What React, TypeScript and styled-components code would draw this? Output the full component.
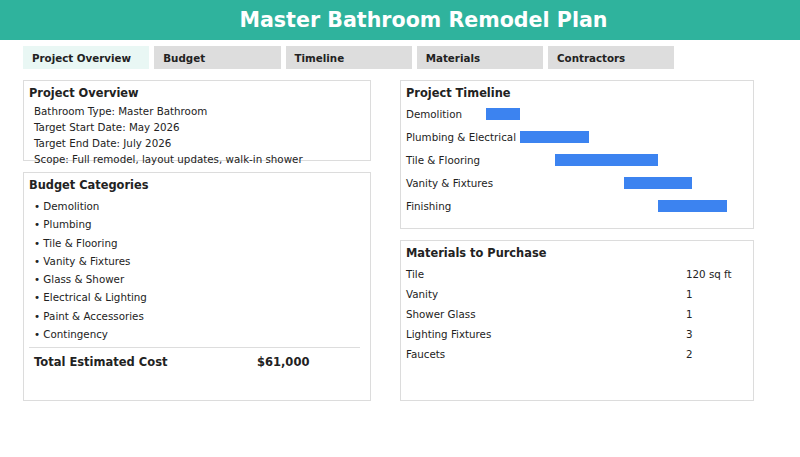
import React from "react";
import styled, { createGlobalStyle } from "styled-components";

const Global = createGlobalStyle`
  html, body { margin: 0; padding: 0; background: #fff; }
  body { font-family: "DejaVu Sans", "Liberation Sans", sans-serif; color: #222; overflow: hidden; }
`;

const Page = styled.div`
  width: 800px;
  height: 457px;
  overflow: hidden;
`;

const Header = styled.header`
  height: 40px;
  background: #2fb39d;
  display: flex;
  align-items: center;
  justify-content: center;
  padding-left: 47px;
`;

const Title = styled.h1`
  margin: 0;
  color: #fff;
  font-size: 20.6px;
  font-weight: bold;
`;

const Tabs = styled.nav`
  display: flex;
  gap: 5px;
  padding: 6px 0 0 23px;
`;

const Tab = styled.div<{ $active?: boolean }>`
  width: 126.25px;
  height: 23px;
  box-sizing: border-box;
  padding-left: 9px;
  display: flex;
  align-items: center;
  font-size: 10.3px;
  font-weight: bold;
  background: ${(p) => (p.$active ? "#e9f7f4" : "#dddddd")};
`;

const Grid = styled.main`
  display: grid;
  grid-template-columns: 348px 354px;
  column-gap: 29px;
  padding: 11px 0 0 23px;
`;

const Column = styled.div`
  display: flex;
  flex-direction: column;
  gap: 11px;
`;

const Card = styled.section<{ $h: number }>`
  height: ${(p) => p.$h}px;
  box-sizing: border-box;
  border: 1px solid #dcdcdc;
  padding: 4px 5px;
`;

const CardTitle = styled.h2`
  margin: 0;
  font-size: 11.4px;
  font-weight: bold;
  line-height: 16px;
`;

const InfoList = styled.div`
  padding: 2px 0 0 5px;
  font-size: 10.3px;
  line-height: 16px;
  white-space: nowrap;
`;

const BulletList = styled.ul`
  list-style: none;
  margin: 0;
  padding: 4px 0 0 5px;
  font-size: 10.3px;
`;

const Bullet = styled.li`
  line-height: 18.3px;
`;

const Divider = styled.hr`
  border: none;
  border-top: 1px solid #dddddd;
  margin: 4px 5px 0 0;
`;

const TotalRow = styled.div`
  display: grid;
  grid-template-columns: 223px auto;
  padding: 6px 0 0 5px;
  font-size: 11.5px;
  font-weight: bold;
  line-height: 16px;
`;

const TimelineRows = styled.div`
  padding-top: 1px;
  display: flex;
  flex-direction: column;
`;

const TimelineRow = styled.div`
  position: relative;
  height: 23px;
  display: flex;
  align-items: center;
  font-size: 10.3px;
`;

const Bar = styled.div`
  position: absolute;
  top: 6px;
  height: 12px;
  background: #3c83f0;
`;

const MaterialRows = styled.div`
  padding-top: 3px;
`;

const MaterialRow = styled.div`
  display: grid;
  grid-template-columns: 280px auto;
  height: 20px;
  align-items: center;
  font-size: 10.3px;
`;

const tabs = ["Project Overview", "Budget", "Timeline", "Materials", "Contractors"];

const overview = [
  "Bathroom Type: Master Bathroom",
  "Target Start Date: May 2026",
  "Target End Date: July 2026",
  "Scope: Full remodel, layout updates, walk-in shower",
];

const budget = [
  "Demolition",
  "Plumbing",
  "Tile & Flooring",
  "Vanity & Fixtures",
  "Glass & Shower",
  "Electrical & Lighting",
  "Paint & Accessories",
  "Contingency",
];

const unit = 34.4;
const timeline = [
  { name: "Demolition", start: 0, len: 1 },
  { name: "Plumbing & Electrical", start: 1, len: 2 },
  { name: "Tile & Flooring", start: 2, len: 3 },
  { name: "Vanity & Fixtures", start: 4, len: 2 },
  { name: "Finishing", start: 5, len: 2 },
];

const materials = [
  ["Tile", "120 sq ft"],
  ["Vanity", "1"],
  ["Shower Glass", "1"],
  ["Lighting Fixtures", "3"],
  ["Faucets", "2"],
];

export default function App() {
  return (
    <Page>
      <Global />
      <Header>
        <Title>Master Bathroom Remodel Plan</Title>
      </Header>
      <Tabs>
        {tabs.map((t, i) => (
          <Tab key={t} $active={i === 0}>
            {t}
          </Tab>
        ))}
      </Tabs>
      <Grid>
        <Column>
          <Card $h={81}>
            <CardTitle>Project Overview</CardTitle>
            <InfoList>
              {overview.map((l) => (
                <div key={l}>{l}</div>
              ))}
            </InfoList>
          </Card>
          <Card $h={229}>
            <CardTitle>Budget Categories</CardTitle>
            <BulletList>
              {budget.map((b) => (
                <Bullet key={b}>• {b}</Bullet>
              ))}
            </BulletList>
            <Divider />
            <TotalRow>
              <span>Total Estimated Cost</span>
              <span>$61,000</span>
            </TotalRow>
          </Card>
        </Column>
        <Column>
          <Card $h={149}>
            <CardTitle>Project Timeline</CardTitle>
            <TimelineRows>
              {timeline.map((t) => (
                <TimelineRow key={t.name}>
                  {t.name}
                  <Bar style={{ left: 80 + t.start * unit, width: t.len * unit }} />
                </TimelineRow>
              ))}
            </TimelineRows>
          </Card>
          <Card $h={161}>
            <CardTitle>Materials to Purchase</CardTitle>
            <MaterialRows>
              {materials.map(([k, v]) => (
                <MaterialRow key={k}>
                  <span>{k}</span>
                  <span>{v}</span>
                </MaterialRow>
              ))}
            </MaterialRows>
          </Card>
        </Column>
      </Grid>
    </Page>
  );
}
